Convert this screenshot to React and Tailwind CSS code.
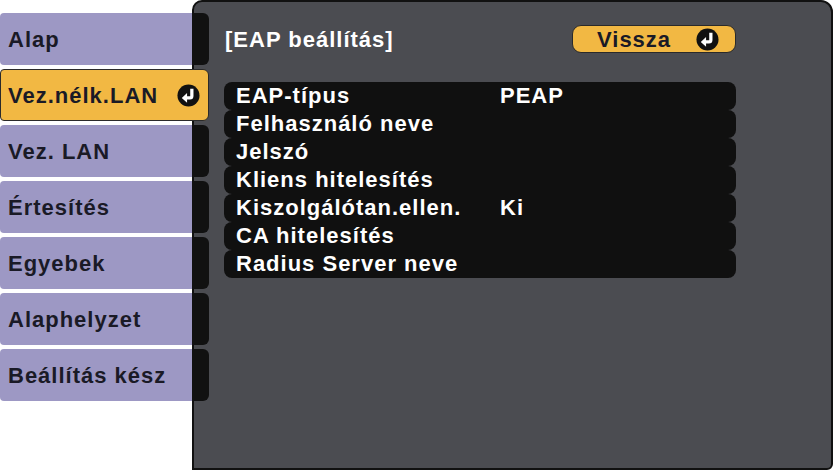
import React from "react";

function EnterIcon({ className = "" }) {
  return (
    <svg viewBox="0 0 24 24" className={className}>
      <circle cx="12" cy="12" r="11.5" fill="#111" />
      <path d="M15.5 5 V12.5 Q15.5 14.5 13.5 14.5 H10" stroke="#fff" strokeWidth="3.4" fill="none" />
      <polygon points="5,14.5 10.5,9.5 10.5,19.5" fill="#fff" />
    </svg>
  );
}

const menu = [
  { label: "Alap" },
  { label: "Vez.nélk.LAN", active: true },
  { label: "Vez. LAN" },
  { label: "Értesítés" },
  { label: "Egyebek" },
  { label: "Alaphelyzet" },
  { label: "Beállítás kész" },
];

const rows = [
  ["EAP-típus", "PEAP"],
  ["Felhasználó neve", ""],
  ["Jelszó", ""],
  ["Kliens hitelesítés", ""],
  ["Kiszolgálótan.ellen.", "Ki"],
  ["CA hitelesítés", ""],
  ["Radius Server neve", ""],
];

export default function App() {
  return (
    <div
      className="flex w-[834px] h-[472px] bg-white overflow-hidden"
      style={{ fontFamily: '"Liberation Sans", Arial, sans-serif' }}
    >
      {/* Menu tabs */}
      <div className="relative z-10 flex flex-col gap-[4px] pt-[13px] w-[209px] shrink-0">
        {menu.map((m) =>
          m.active ? (
            <div
              key={m.label}
              className="flex items-center h-[52px] pl-[7px] pr-[8px] bg-[#f2b843] border border-[#2a2a2a] rounded-r-[6px] rounded-l-[4px] text-[#1a1a26] text-[22px] font-bold tracking-[1px]"
            >
              <span className="flex-1">{m.label}</span>
              <EnterIcon className="w-[23px] h-[23px]" />
            </div>
          ) : (
            <div key={m.label} className="flex h-[52px]">
              <div className="flex items-center w-[192px] pl-[8px] bg-[#9d98c4] rounded-l-[4px] text-[#1a1a26] text-[22px] font-bold tracking-[1px]">
                {m.label}
              </div>
              <div className="w-[17px] bg-[#111] rounded-r-[6px]" />
            </div>
          )
        )}
      </div>

      {/* Main panel */}
      <div className="-ml-[17px] w-[641px] h-[470px] bg-[#4b4c51] border-2 border-[#111] rounded-tl-[10px] rounded-tr-[12px] rounded-br-[6px] pl-[30px] pt-[23px] text-white text-[22px] font-bold tracking-[1px]">
        <div className="flex items-center justify-between w-[512px] h-[28px]">
          <span className="pl-[1px]">[EAP beállítás]</span>
          <div className="flex items-center w-[164px] h-[28px] pl-[24px] pr-[16px] bg-[#f2b843] border border-[#2a2a2a] rounded-[9px] text-[#1a1a26]">
            <span className="flex-1">Vissza</span>
            <EnterIcon className="w-[23px] h-[23px]" />
          </div>
        </div>
        <div className="flex flex-col mt-[29px] w-[512px]">
          {rows.map(([k, v]) => (
            <div key={k} className="flex items-center h-[28px] pl-[12px] bg-[#101010] rounded-[8px] leading-[28px]">
              <span className="w-[264px]">{k}</span>
              <span>{v}</span>
            </div>
          ))}
        </div>
      </div>
    </div>
  );
}
